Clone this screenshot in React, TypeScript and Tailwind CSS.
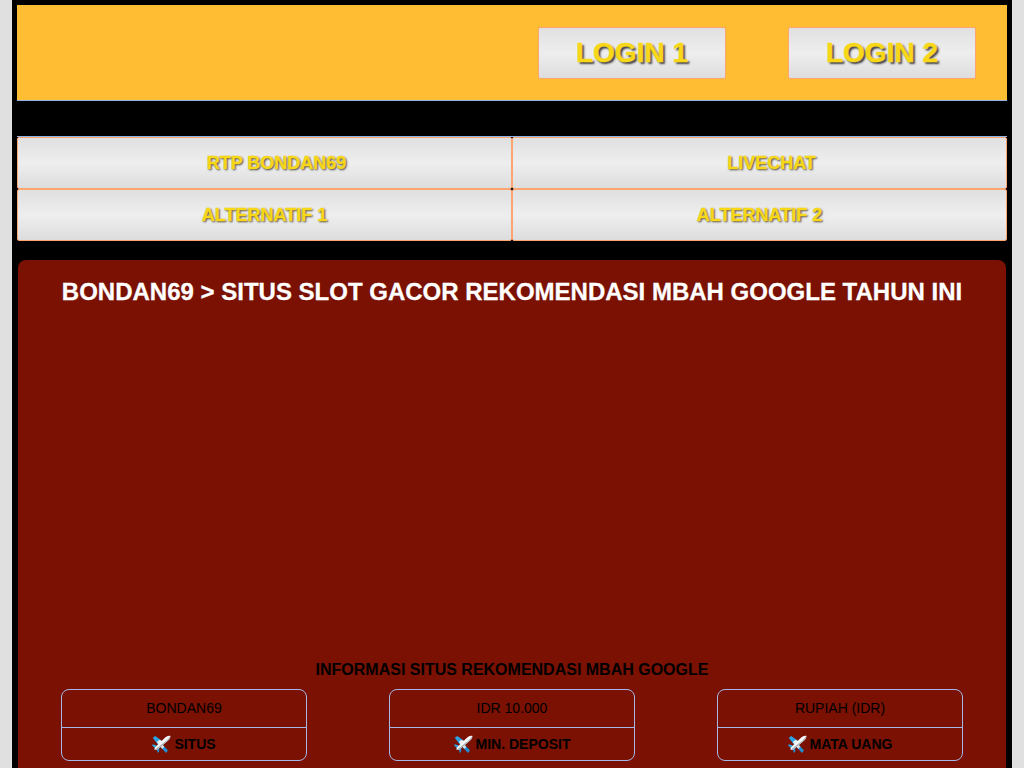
const navLinks = [
  { label: 'RTP BONDAN69', cls: 'pl-[24px]' },
  { label: 'LIVECHAT', cls: 'pl-[24px]' },
  { label: 'ALTERNATIF 1', cls: '' },
  { label: 'ALTERNATIF 2', cls: '' },
];

const infoCards = [
  { value: 'BONDAN69', label: 'SITUS' },
  { value: 'IDR 10.000', label: 'MIN. DEPOSIT' },
  { value: 'RUPIAH (IDR)', label: 'MATA UANG' },
];

function Plane() {
  return (
    <svg viewBox="0 0 20 20" className="w-[19px] h-[19px] shrink-0">
      {/* wings and tail */}
      <path d="M11 6.5 L3.4 1 L.8 2.8 L6.2 10 Z" fill="#2aa5e6" />
      <path d="M8 5 L11 6.5 L7 10 L5 7.4 Z" fill="#e8edf0" />
      <path d="M10.4 9.6 L16.8 16 L14.8 19 L8.4 12.2 Z" fill="#1f8fd6" />
      <path d="M10.4 9.6 L13 12.4 L11 14.8 L8.4 12.2 Z" fill="#d5dce0" />
      <path d="M5 11 L.8 9.8 L.2 11 L3.4 14 Z" fill="#2aa5e6" />
      <path d="M4.8 13.4 L6 18.8 L7.4 18.2 L7.8 13.2 Z" fill="#1f8fd6" />
      {/* body */}
      <path d="M19.2 .9 C17.6 .3 15.4 1.2 13.6 2.8 L2.8 13.4 L2.6 15.6 L5 15.8 L16.4 6.4 C18.2 4.8 19.8 2.6 19.2 .9 Z" fill="#f6f8f9" />
      <path d="M19.2 .9 C19.8 2.6 18.2 4.8 16.4 6.4 L5 15.8 L2.6 15.6 L15 6 C16.8 4.6 18.4 2.6 19.2 .9 Z" fill="#a9b2b8" />
    </svg>
  );
}

export default function App() {
  return (
    <div className="h-screen overflow-hidden bg-[#e0e0e0] font-['Liberation_Sans',Arial,sans-serif]">
      <div className="mx-auto w-[1000px] h-full bg-black px-[5px] pt-[5px]">
        {/* Header */}
        <header className="h-[96px] bg-[#ffbd33] border-b border-[#8fb4e8] flex items-start justify-end pt-[22px] pr-[31px] gap-[62px]">
          {['LOGIN 1', 'LOGIN 2'].map((t) => (
            <a
              key={t}
              className="w-[188px] h-[52px] flex items-center justify-center rounded-[2px] border border-[#ffa570] bg-[linear-gradient(180deg,#e0e0e0_0%,#eeeeee_50%,#dddddd_100%)] text-[28px] font-bold text-[#f7d716] [-webkit-text-stroke:0.4px_#f7d716] [text-shadow:2px_2px_2px_#444]"
            >
              {t}
            </a>
          ))}
        </header>

        {/* Nav */}
        <nav className="mt-[35px] grid grid-cols-2 border-t border-[#8fb4e8]">
          {navLinks.map((l) => (
            <a
              key={l.label}
              className={`h-[52px] flex items-center justify-center rounded-[2px] border border-[#ffa570] bg-[linear-gradient(180deg,#e0e0e0_0%,#eeeeee_50%,#dddddd_100%)] text-[18px] font-bold text-[#f7d716] [-webkit-text-stroke:0.3px_#f7d716] [text-shadow:1px_1px_2px_#333] ${l.cls}`}
            >
              {l.label}
            </a>
          ))}
        </nav>

        {/* Main */}
        <main className="mt-[19px] mx-[1px] rounded-[8px] bg-[#7a1102] px-[43px] pt-[18px] h-[600px]">
          <h1 className="text-[24px] leading-[28px] font-bold text-white text-center [-webkit-text-stroke:0.3px_#ffffff]">
            BONDAN69 &gt; SITUS SLOT GACOR REKOMENDASI MBAH GOOGLE TAHUN INI
          </h1>
          <div className="h-[355px]" />
          <h2 className="text-[16px] leading-[18px] font-bold text-black text-center">
            INFORMASI SITUS REKOMENDASI MBAH GOOGLE
          </h2>
          <div className="mt-[10px] flex justify-between">
            {infoCards.map((c) => (
              <div key={c.label} className="w-[246px] h-[72px] rounded-[8px] border border-[#a3b8e8] flex flex-col text-black">
                <div className="h-[38px] flex items-center justify-center text-[14px] border-b border-[#a3b8e8]">
                  {c.value}
                </div>
                <div className="flex-1 flex items-center justify-center gap-[3px] text-[14px] font-bold">
                  <Plane />
                  {c.label}
                </div>
              </div>
            ))}
          </div>
        </main>
      </div>
    </div>
  );
}
